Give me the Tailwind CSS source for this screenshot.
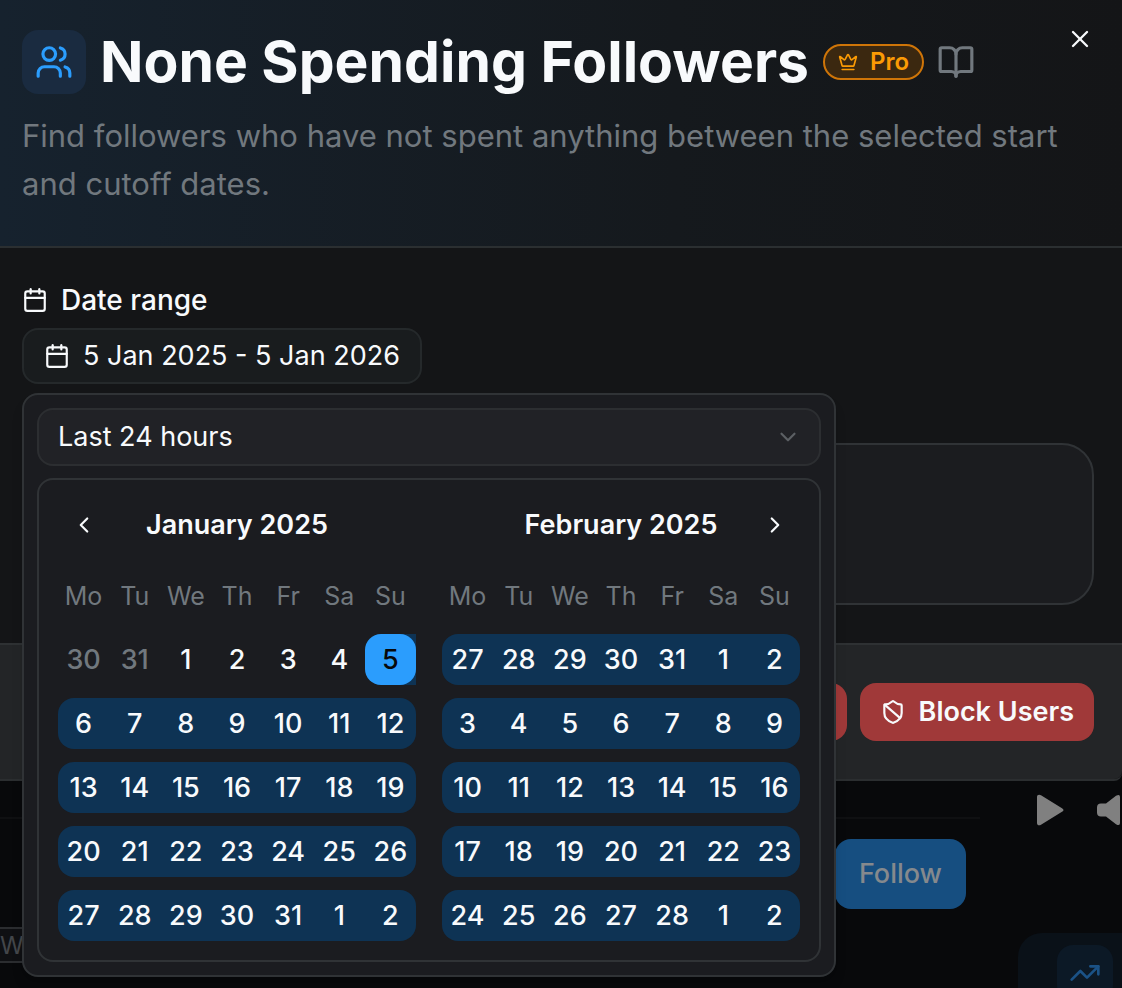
<!DOCTYPE html>
<html lang="en">

<head>
    <meta charset="UTF-8" />
    <meta name="viewport" content="width=device-width, initial-scale=1.0" />
    <title>None Spending Followers</title>
    <script src="https://cdn.jsdelivr.net/npm/@tailwindcss/browser@4"></script>
</head>

<body class="bg-[#08090b] h-screen overflow-hidden flex flex-col font-['Inter',sans-serif] text-[27px] leading-10 text-[#f8fafc]">
    <div role="dialog" aria-labelledby="title" class="relative z-10 shrink-0 bg-[#141517] rounded-br-lg border-b-2 border-[#2b2e30]">
        <header class="relative pl-[22px] pr-7 pt-7 pb-[38px] border-b-2 border-[#2b2f31] bg-linear-to-r from-[#16222e] via-[#15191d] via-60% to-[#141517]">
            <div class="flex items-center">
                <div class="size-16 shrink-0 rounded-2xl bg-[#1a2b40] flex items-center justify-center mr-[14px]">
                    <svg class="size-[38px] text-[#2b9dfd]" viewBox="0 0 24 24" fill="none" stroke="currentColor" stroke-width="2" stroke-linecap="round" stroke-linejoin="round">
                        <path d="M16 21v-2a4 4 0 0 0-4-4H6a4 4 0 0 0-4 4v2" />
                        <circle cx="9" cy="7" r="4" />
                        <path d="M22 21v-2a4 4 0 0 0-3-3.87" />
                        <path d="M16 3.13a4 4 0 0 1 0 7.75" />
                    </svg>
                </div>
                <h1 id="title" class="text-[57px] leading-[68px] font-bold whitespace-nowrap">None Spending Followers</h1>
                <span class="ml-[14px] h-9 px-[13px] rounded-full border-2 border-[#cf7508] bg-[#3b2810] text-[#fb9b05] text-2xl font-semibold flex items-center gap-3">
                    <svg class="size-5" viewBox="0 0 24 24" fill="none" stroke="currentColor" stroke-width="2" stroke-linecap="round" stroke-linejoin="round">
                        <path d="M11.562 3.266a.5.5 0 0 1 .876 0L15.39 8.87a1 1 0 0 0 1.516.294L21.183 5.5a.5.5 0 0 1 .798.519l-2.834 10.246a1 1 0 0 1-.956.734H5.81a1 1 0 0 1-.957-.734L2.02 6.02a.5.5 0 0 1 .798-.519l4.276 3.664a1 1 0 0 0 1.516-.294z" />
                        <path d="M5 21h14" />
                    </svg>
                    Pro
                </span>
                <a href="#" aria-label="Guide" class="ml-[13px] text-[#71787e]">
                    <svg class="size-[38px]" viewBox="0 0 24 24" fill="none" stroke="currentColor" stroke-width="2" stroke-linecap="round" stroke-linejoin="round">
                        <path d="M12 7v14" />
                        <path d="M3 18a1 1 0 0 1-1-1V4a1 1 0 0 1 1-1h5a4 4 0 0 1 4 4 4 4 0 0 1 4-4h5a1 1 0 0 1 1 1v13a1 1 0 0 1-1 1h-6a3 3 0 0 0-3 3 3 3 0 0 0-3-3z" />
                    </svg>
                </a>
            </div>
            <p class="mt-4 text-[31px] leading-[48px] text-[#71787e]">Find followers who have not spent anything between the selected start and cutoff dates.</p>
            <button type="button" aria-label="Close" class="absolute top-[25px] right-7">
                <svg class="size-7" viewBox="0 0 24 24" fill="none" stroke="currentColor" stroke-width="2" stroke-linecap="round" stroke-linejoin="round">
                    <path d="M18 6 6 18" />
                    <path d="m6 6 12 12" />
                </svg>
            </button>
        </header>

        <div class="pl-[22px] pr-7 pt-8 pb-[38px]">
            <div class="relative w-fit">
                <label for="range" class="flex items-center gap-[13px] text-[28px] leading-10 font-medium">
                    <svg class="size-[26px]" viewBox="0 0 24 24" fill="none" stroke="currentColor" stroke-width="2" stroke-linecap="round" stroke-linejoin="round">
                        <path d="M8 2v4" />
                        <path d="M16 2v4" />
                        <rect width="18" height="18" x="3" y="4" rx="2" />
                        <path d="M3 10h18" />
                    </svg>
                    Date range
                </label>
                <button id="range" type="button" class="mt-2 h-14 px-5 rounded-2xl border-2 border-[#25292b] bg-[#191c1e] flex items-center gap-[13px] whitespace-nowrap">
                    <svg class="size-[26px]" viewBox="0 0 24 24" fill="none" stroke="currentColor" stroke-width="2" stroke-linecap="round" stroke-linejoin="round">
                        <path d="M8 2v4" />
                        <path d="M16 2v4" />
                        <rect width="18" height="18" x="3" y="4" rx="2" />
                        <path d="M3 10h18" />
                    </svg>
                    5 Jan 2025 - 5 Jan 2026
                </button>

                <div class="absolute left-0 top-full mt-[9px] w-[814px] p-[13px] rounded-2xl border-2 border-[#303336] bg-[#1b1c20] shadow-lg">
                    <div class="relative">
                        <select aria-label="Preset" class="appearance-none block w-full h-[58px] px-[19px] rounded-2xl border-2 border-[#2c2e31] bg-[#212226]">
                            <option>Last 24 hours</option>
                            <option>Last 7 days</option>
                            <option>Last 30 days</option>
                        </select>
                        <svg class="absolute right-5 top-4 size-[26px] text-[#5c6064] pointer-events-none" viewBox="0 0 24 24" fill="none" stroke="currentColor" stroke-width="2" stroke-linecap="round" stroke-linejoin="round">
                            <path d="m6 9 6 6 6-6" />
                        </svg>
                    </div>
                    <div class="relative mt-3 px-[19px] py-[19px] rounded-2xl border-2 border-[#303336] flex gap-[26px]" id="months">
                        <button type="button" aria-label="Previous month" class="absolute left-[19px] top-[19px] size-[51px] flex items-center justify-center">
                            <svg class="size-[26px]" viewBox="0 0 24 24" fill="none" stroke="currentColor" stroke-width="2" stroke-linecap="round" stroke-linejoin="round">
                                <path d="m15 18-6-6 6-6" />
                            </svg>
                        </button>
                        <button type="button" aria-label="Next month" class="absolute right-[19px] top-[19px] size-[51px] flex items-center justify-center">
                            <svg class="size-[26px]" viewBox="0 0 24 24" fill="none" stroke="currentColor" stroke-width="2" stroke-linecap="round" stroke-linejoin="round">
                                <path d="m9 18 6-6-6-6" />
                            </svg>
                        </button>
                    </div>
                </div>
            </div>

            <textarea aria-label="Excluded users" class="mt-[59px] block w-full h-[162px] resize-none rounded-[32px] border-2 border-[#303336] bg-[#1b1c1f] p-6"></textarea>
        </div>

        <footer class="pl-[22px] pr-7 py-[38px] border-t-2 border-[#2e3133] bg-[#232527] rounded-br-lg flex justify-end gap-[13px] font-semibold">
            <button type="button" aria-label="Restrict Users" class="h-[58px] w-60 rounded-2xl bg-[#a03939]"></button>
            <button type="button" class="h-[58px] px-5 rounded-2xl bg-[#a03939] flex items-center gap-[13px]">
                <svg class="size-[26px]" viewBox="0 0 24 24" fill="none" stroke="currentColor" stroke-width="2" stroke-linecap="round" stroke-linejoin="round">
                    <path d="M20 13c0 5-3.5 7.5-7.66 8.95a1 1 0 0 1-.67-.01C7.5 20.5 4 18 4 13V6a1 1 0 0 1 1-1c2 0 4.5-1.2 6.24-2.72a1.17 1.17 0 0 1 1.52 0C14.51 3.81 17 5 19 5a1 1 0 0 1 1 1z" />
                    <path d="m4.243 5.21 14.39 12.472" />
                </svg>
                Block Users
            </button>
        </footer>
    </div>

    <!-- dimmed page behind the dialog -->
    <main class="flex-1 flex overflow-hidden">
        <div class="flex-1 pt-9">
            <hr class="border-t-2 border-[#0f1012]" />
            <div class="mt-5 flex justify-end pr-[14px]">
                <button type="button" class="h-[70px] px-6 rounded-2xl bg-[#164e80] text-[#85898d] font-medium">Follow</button>
            </div>
            <input type="text" aria-label="Message" value="Write a message" class="mt-[18px] block w-60 h-9 border-y-2 border-[#2b2d30] bg-[#0f1013] text-2xl text-[#43464a]" />
        </div>
        <aside class="w-[142px] flex flex-col justify-between">
            <div class="flex pt-[13px] pl-[57px] gap-[33px] text-[#808080]">
                <svg class="w-[27px] h-8 shrink-0" viewBox="0 0 27 32" fill="currentColor">
                    <path d="M0 3C0 .8 2 0 4 1.200L25 14.200Q28 16 25 17.800L4 30.800C2 32 0 31.200 0 29Z" />
                </svg>
                <svg class="w-6 h-8 shrink-0" viewBox="0 0 24 32" fill="currentColor">
                    <path d="M4 9.500H9L19 1.800Q23 -.5 23 3V29Q23 32.500 19 30.200L9 22.500H4Q0 22.500 0 18.500V13.500Q0 9.500 4 9.500Z" />
                </svg>
            </div>
            <div class="h-[55px] ml-[38px] pl-[39px] pt-3 rounded-tl-3xl bg-[#0a1118] overflow-hidden">
                <div class="size-14 rounded-2xl bg-[#0c1926] flex items-center justify-center">
                    <svg class="size-8 shrink-0 text-[#1b5286]" viewBox="0 0 24 24" fill="none" stroke="currentColor" stroke-width="2" stroke-linecap="round" stroke-linejoin="round">
                        <path d="M16 7h6v6" />
                        <path d="m22 7-8.500 8.500-5-5L2 17" />
                    </svg>
                </div>
            </div>
        </aside>
    </main>

    <script>
    const WEEKDAYS = ['Mo', 'Tu', 'We', 'Th', 'Fr', 'Sa', 'Su'];
    // first = Monday that opens the grid
    const MONTHS = [
        { name: 'January 2025', first: new Date(2024, 11, 30) },
        { name: 'February 2025', first: new Date(2025, 0, 27) }
    ];
    const START = new Date(2025, 0, 5);

    function dayCell(date) {
        if (date < START) {
            const color = date.getMonth() === 11 ? 'text-[#71787e]' : '';
            return `<td><button type="button" class="w-full h-[51px] ${color}">${date.getDate()}</button></td>`;
        }
        if (date.getTime() === START.getTime()) {
            return `<td class="bg-linear-to-r from-transparent from-50% to-[#0e3354] to-50%"><button type="button" class="w-full h-[51px] rounded-2xl bg-[#2b9dfd] text-[#08090b]">${date.getDate()}</button></td>`;
        }
        return `<td><button type="button" class="w-full h-[51px]">${date.getDate()}</button></td>`;
    }

    MONTHS.forEach((month) => {
        let rows = '';
        for (let week = 0; week < 5; week++) {
            const days = WEEKDAYS.map((_, i) => {
                const d = new Date(month.first);
                d.setDate(d.getDate() + week * 7 + i);
                return d;
            });
            const inRange = days[0] > START ? 'rounded-2xl bg-[#0e3354]' : '';
            rows += `<tr class="grid grid-cols-7 mt-[13px] ${inRange}">${days.map(dayCell).join('')}</tr>`;
        }
        const head = WEEKDAYS.map((d) => `<th class="font-normal">${d}</th>`).join('');
        document.getElementById('months').insertAdjacentHTML('beforeend', `
            <table class="block flex-1">
                <caption class="block h-[51px] leading-[51px] font-semibold">${month.name}</caption>
                <thead class="block mt-[26px] pb-[5px] text-[25px] leading-10 text-[#71787e]"><tr class="grid grid-cols-7">${head}</tr></thead>
                <tbody class="block font-medium text-center">${rows}</tbody>
            </table>`);
    });
    </script>
</body>

</html>
